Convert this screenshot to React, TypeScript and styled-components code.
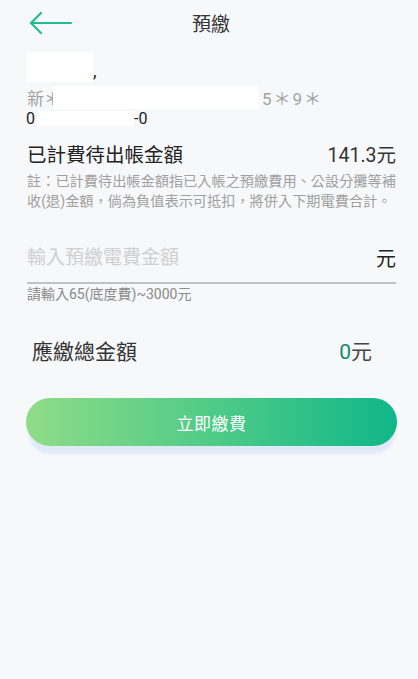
import React from 'react'
import styled, { createGlobalStyle } from 'styled-components'

const GlobalStyle = createGlobalStyle`
  html, body {
    margin: 0;
    padding: 0;
    background: #f7f8fa;
  }
  body {
    font-family: Roboto, "Noto Sans CJK TC", "Noto Sans", sans-serif;
  }
`

function BackArrow() {
  return (
    <svg width="44" height="24" viewBox="0 0 44 24" fill="none">
      <path d="M2 12 H42" stroke="#20bd8a" strokeWidth="2.2" strokeLinecap="round" />
      <path d="M12 2 L2 12 L12 22" stroke="#20bd8a" strokeWidth="2.2" strokeLinecap="round" strokeLinejoin="round" />
    </svg>
  )
}

export default function App() {
  return (
    <Page>
      <GlobalStyle />
      <Header>
        <BackButton>
          <BackArrow />
        </BackButton>
        <Title>預繳</Title>
        <span />
      </Header>

      <Content>
        <Account>
          <NameLine>
            <Mask w={66} h={30} />
            <Comma>,</Comma>
          </NameLine>
          <AddressLine>
            新＊
            <Mask w={206} h={23} shift={-8} />
            <Stars>5＊9＊</Stars>
          </AddressLine>
          <NumberLine>
            0
            <Mask w={96} h={15} />
            -0
          </NumberLine>
        </Account>

        <AmountRow>
          <AmountLabel>已計費待出帳金額</AmountLabel>
          <AmountValue>141.3元</AmountValue>
        </AmountRow>
        <Note>
          註：已計費待出帳金額指已入帳之預繳費用、公設分攤等補收(退)金額，倘為負值表示可抵扣，將併入下期電費合計。
        </Note>

        <InputRow>
          <AmountInput type="text" placeholder="輸入預繳電費金額" />
          <Unit>元</Unit>
        </InputRow>
        <Hint>請輸入65(底度費)~3000元</Hint>

        <TotalRow>
          <TotalLabel>應繳總金額</TotalLabel>
          <TotalValue>
            <Zero>0</Zero>元
          </TotalValue>
        </TotalRow>

        <PayButton>立即繳費</PayButton>
      </Content>
    </Page>
  )
}

const Page = styled.div`
  min-height: 100vh;
  background: #f7f8fa;
  color: #222;
`

const Header = styled.div`
  height: 44px;
  display: grid;
  grid-template-columns: 1fr auto 1fr;
  align-items: center;
`

const BackButton = styled.div`
  padding-left: 29px;
  display: flex;
  align-items: center;
  padding-top: 1px;
`

const Title = styled.div`
  font-size: 19px;
  color: #333;
  transform: translateX(2px);
`

const Content = styled.div`
  padding: 0 22px 0 27px;
`

const Account = styled.div`
  padding-top: 8px;
  display: flex;
  flex-direction: column;
`

const Mask = styled.span<{ w: number; h: number; shift?: number }>`
  display: inline-block;
  width: ${({ w }) => w}px;
  height: ${({ h }) => h}px;
  background: #ffffff;
  margin-left: ${({ shift }) => shift || 0}px;
  vertical-align: middle;
`

const NameLine = styled.div`
  height: 35px;
  display: flex;
  align-items: flex-start;
`

const Comma = styled.span`
  font-size: 18px;
  line-height: 30px;
  color: #222;
  padding-top: 4px;
`

const AddressLine = styled.div`
  height: 25px;
  display: flex;
  align-items: center;
  font-size: 17px;
  color: #a3a3a3;
  margin-top: -2px;
`

const Stars = styled.span`
  margin-left: 3px;
  letter-spacing: 2px;
`

const NumberLine = styled.div`
  height: 17px;
  display: flex;
  align-items: center;
  font-size: 16px;
  color: #222;
  margin-left: -1px;

  ${Mask} {
    margin-left: 3px;
  }
`

const AmountRow = styled.div`
  display: flex;
  justify-content: space-between;
  align-items: center;
  margin-top: 14px;
  height: 24px;
`

const AmountLabel = styled.div`
  font-size: 19.5px;
  color: #222;
`

const AmountValue = styled.div`
  font-size: 19.5px;
  color: #333;
`

const Note = styled.div`
  margin-top: 7px;
  font-size: 14.2px;
  line-height: 19.5px;
  color: #a0a0a0;
`

const InputRow = styled.div`
  margin-top: 31px;
  display: flex;
  align-items: center;
  height: 40px;
  border-bottom: 2px solid #c2c2c2;
`

const AmountInput = styled.input`
  flex: 1;
  border: 0;
  outline: 0;
  background: transparent;
  padding: 0;
  font-family: Roboto, "Noto Sans CJK TC", sans-serif;
  font-size: 19px;
  color: #222;
  margin-top: -10px;

  &::placeholder {
    color: #cfcfcf;
  }
`

const Unit = styled.div`
  font-size: 20px;
  color: #222;
  margin-top: -10px;
`

const Hint = styled.div`
  margin-top: -1px;
  font-size: 14px;
  color: #8a8a8a;
`

const TotalRow = styled.div`
  margin-top: 32px;
  padding: 0 24px 0 5px;
  height: 30px;
  display: flex;
  justify-content: space-between;
  align-items: center;
`

const TotalLabel = styled.div`
  font-size: 21px;
  color: #333;
`

const TotalValue = styled.div`
  font-size: 21px;
  color: #444;
`

const Zero = styled.span`
  color: #138a6c;
`

const PayButton = styled.button`
  margin-top: 33px;
  margin-left: -1px;
  width: 371px;
  height: 48px;
  border: 0;
  border-radius: 24px;
  background: linear-gradient(90deg, #90dc88 0%, #4fcb87 50%, #10b78a 100%);
  box-shadow: 0 10px 3px -2px #e1eaf9;
  color: #ffffff;
  font-family: Roboto, "Noto Sans CJK TC", sans-serif;
  font-size: 17px;
  letter-spacing: 0.5px;
  cursor: pointer;
`
